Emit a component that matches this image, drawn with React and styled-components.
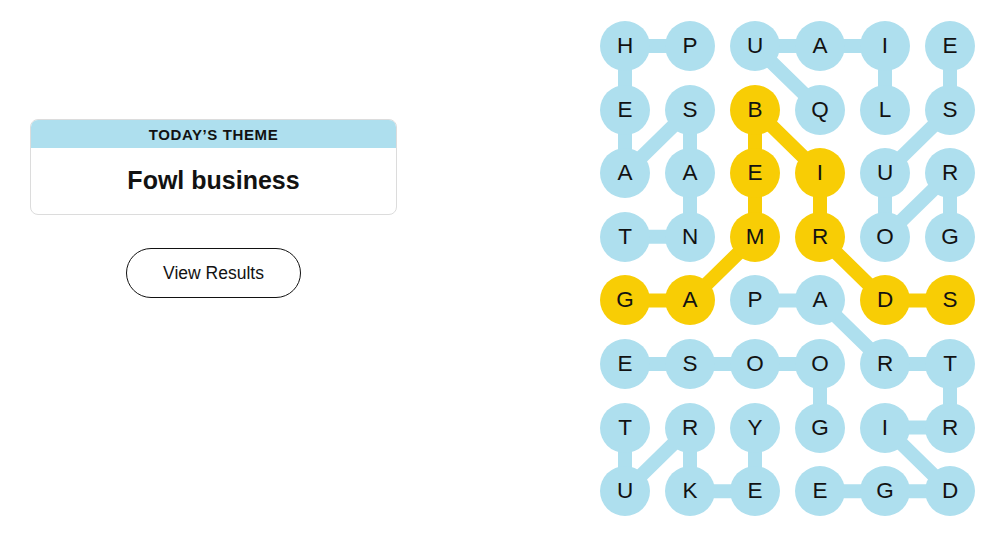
import React from "react";
import styled, { createGlobalStyle } from "styled-components";

const Global = createGlobalStyle`
  html, body { margin: 0; padding: 0; background: #ffffff; }
  body { font-family: "Liberation Sans", Arial, sans-serif; color: #121212; }
`;

const BLUE = "#aedfee";
const YELLOW = "#f8cd05";
const CELL = 50;
const COL_STEP = 65;
const ROW_STEP = 63.6;

const GRID = [
  "HPUAIE",
  "ESBQLS",
  "AAEIUR",
  "TNMROG",
  "GAPADS",
  "ESOORT",
  "TRYGIR",
  "UKEEGD",
];

const WORDS = [
  { spangram: false, path: [[0,1],[0,0],[1,0],[2,0],[1,1],[2,1],[3,1],[3,0]] },
  { spangram: false, path: [[1,3],[0,2],[0,3],[0,4],[1,4]] },
  { spangram: false, path: [[3,5],[2,5],[3,4],[2,4],[1,5],[0,5]] },
  { spangram: true, path: [[4,0],[4,1],[3,2],[2,2],[1,2],[2,3],[3,3],[4,4],[4,5]] },
  { spangram: false, path: [[4,2],[4,3],[5,4],[5,5],[6,5],[6,4],[7,5],[7,4],[7,3]] },
  { spangram: false, path: [[6,3],[5,3],[5,2],[5,1],[5,0]] },
  { spangram: false, path: [[6,0],[7,0],[6,1],[7,1],[7,2],[6,2]] },
];

const yellowSet = new Set(
  WORDS.filter((w) => w.spangram).flatMap((w) => w.path.map(([r, c]) => `${r}-${c}`))
);

const Page = styled.main`
  display: flex;
  align-items: flex-start;
  width: 1000px;
  height: 538px;
  box-sizing: border-box;
  padding: 21px 0 0 30px;
`;

const LeftPanel = styled.section`
  width: 367px;
  display: flex;
  flex-direction: column;
  align-items: center;
  padding-top: 98px;
`;

const ThemeCard = styled.div`
  width: 100%;
  box-sizing: border-box;
  border: 1px solid #dcdcdc;
  border-radius: 8px;
  overflow: hidden;
  background: #fff;
`;

const ThemeHeader = styled.div`
  background: ${BLUE};
  height: 28px;
  display: flex;
  align-items: center;
  justify-content: center;
  font-size: 15px;
  font-weight: 700;
  letter-spacing: 0.6px;
  color: #121212;
`;

const ThemeBody = styled.div`
  height: 66px;
  display: flex;
  align-items: center;
  justify-content: center;
  font-size: 25px;
  font-weight: 700;
  color: #121212;
  padding-bottom: 1px;
  box-sizing: border-box;
`;

const ResultsButton = styled.button`
  margin-top: 33px;
  width: 175px;
  height: 50px;
  border-radius: 25px;
  border: 1px solid #121212;
  background: #fff;
  font-family: "Liberation Sans", Arial, sans-serif;
  font-size: 17.5px;
  color: #121212;
  cursor: pointer;
`;

const Board = styled.div`
  position: relative;
  margin-left: 203px;
  display: grid;
  grid-template-columns: repeat(6, ${CELL}px);
  grid-auto-rows: ${CELL}px;
  column-gap: ${COL_STEP - CELL}px;
  row-gap: ${ROW_STEP - CELL}px;
`;

const Lines = styled.svg`
  position: absolute;
  left: 0;
  top: 0;
  overflow: visible;
  pointer-events: none;
`;

const Letter = styled.div`
  position: relative;
  width: ${CELL}px;
  height: ${CELL}px;
  border-radius: 50%;
  background: ${(p) => (p.$spangram ? YELLOW : BLUE)};
  display: flex;
  align-items: center;
  justify-content: center;
  font-size: 22.5px;
  color: #121212;
`;

const center = ([r, c]) => [CELL / 2 + c * COL_STEP, CELL / 2 + r * ROW_STEP];

export default function App() {
  return (
    <>
      <Global />
      <Page>
        <LeftPanel>
          <ThemeCard>
            <ThemeHeader>TODAY’S THEME</ThemeHeader>
            <ThemeBody>Fowl business</ThemeBody>
          </ThemeCard>
          <ResultsButton>View Results</ResultsButton>
        </LeftPanel>
        <Board>
          <Lines width={CELL + 5 * COL_STEP} height={CELL + 7 * ROW_STEP}>
            {WORDS.map((w, i) => (
              <polyline
                key={i}
                points={w.path.map((p) => center(p).join(",")).join(" ")}
                fill="none"
                stroke={w.spangram ? YELLOW : BLUE}
                strokeWidth="14"
                strokeLinejoin="round"
                strokeLinecap="round"
              />
            ))}
          </Lines>
          {GRID.flatMap((row, r) =>
            row.split("").map((ch, c) => (
              <Letter key={`${r}-${c}`} $spangram={yellowSet.has(`${r}-${c}`)}>
                {ch}
              </Letter>
            ))
          )}
        </Board>
      </Page>
    </>
  );
}
